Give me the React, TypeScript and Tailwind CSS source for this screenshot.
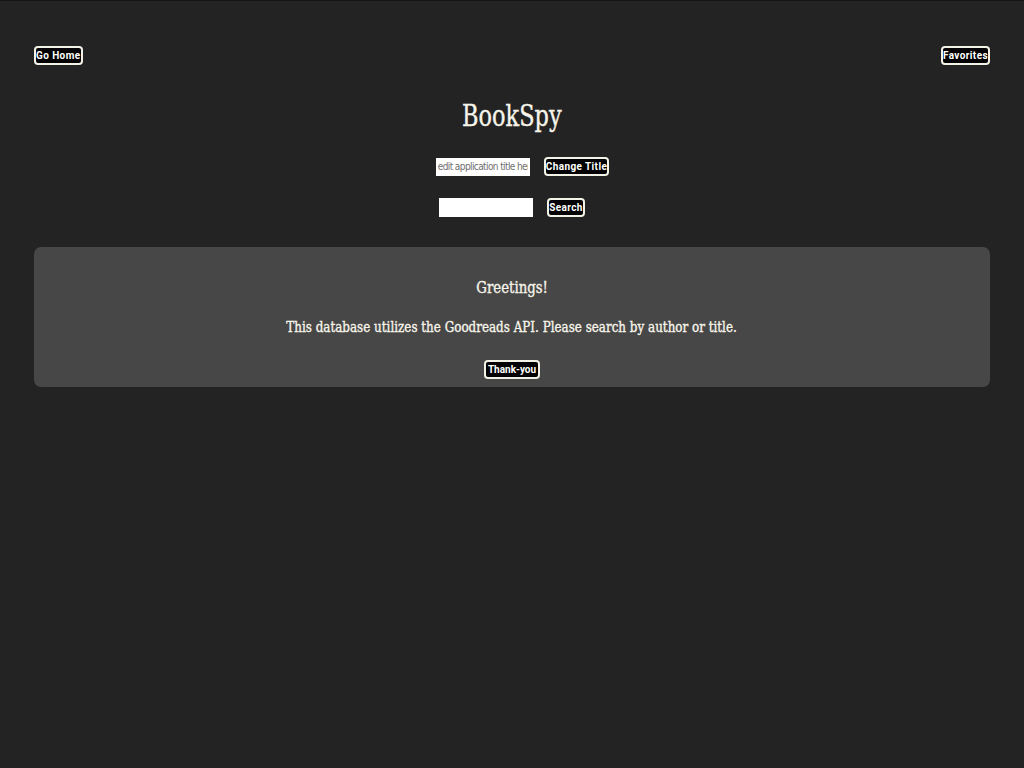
import React, { useState } from "react";

const serif =
  "inline-block font-['DejaVu_Serif','Liberation_Serif',serif] font-stretch-condensed text-[#f7f5ea] whitespace-nowrap [-webkit-text-stroke:0.35px_#f7f5ea]";
const btn =
  "bg-black text-white border-2 border-[#f2f2e6] rounded-[4px] font-['Roboto','Liberation_Sans',sans-serif] font-bold text-[10px] leading-none h-[19px] tracking-[0.04em]";

export default function App() {
  const [title, setTitle] = useState("BookSpy");
  const [draft, setDraft] = useState("");
  const [query, setQuery] = useState("");

  return (
    <div className="min-h-screen bg-[#232323] border-t border-[#141414] text-[#f5f5e8]">
      <div className="flex justify-between px-[34px] pt-[45px]">
        <button className={btn + " px-0"}>Go Home</button>
        <button className={btn + " px-0"}>Favorites</button>
      </div>

      <div className="text-center mt-[37px]">
        <h1 className={serif + " text-[29px] leading-none [transform:scaleX(0.86)]"}>{title}</h1>
      </div>

      <div className="flex justify-center items-center gap-[14px] mt-[25px] pl-[21px]">
        <input
          value={draft}
          onChange={(e) => setDraft(e.target.value)}
          placeholder="edit application title here"
          className="w-[94px] h-[18px] bg-white text-black text-[10px] px-[2px] font-['DejaVu_Sans',sans-serif] font-stretch-condensed tracking-[-0.06em] placeholder:text-[#6f6f6f] outline-none"
        />
        <button className={btn + " px-0"} onClick={() => draft && setTitle(draft)}>
          Change Title
        </button>
      </div>

      <div className="flex justify-center items-center gap-[14px] mt-[22px]">
        <input
          value={query}
          onChange={(e) => setQuery(e.target.value)}
          className="w-[94px] h-[19px] bg-white text-black text-[10px] px-[2px] outline-none"
        />
        <button className={btn + " px-0"}>Search</button>
      </div>

      <div className="mx-[34px] mt-[30px] bg-[#474747] rounded-[7px] h-[140px] flex flex-col items-center">
        <h2 className={serif + " text-[17px] leading-none mt-[32px] [transform:scaleX(0.87)]"}>Greetings!</h2>
        <p className={serif + " text-[15px] leading-none mt-[24px] [transform:scaleX(0.885)]"}>
          This database utilizes the Goodreads API. Please search by author or title.
        </p>
        <button className={btn + " mt-[25px] px-[2px] tracking-normal"}>Thank-you</button>
      </div>
    </div>
  );
}
